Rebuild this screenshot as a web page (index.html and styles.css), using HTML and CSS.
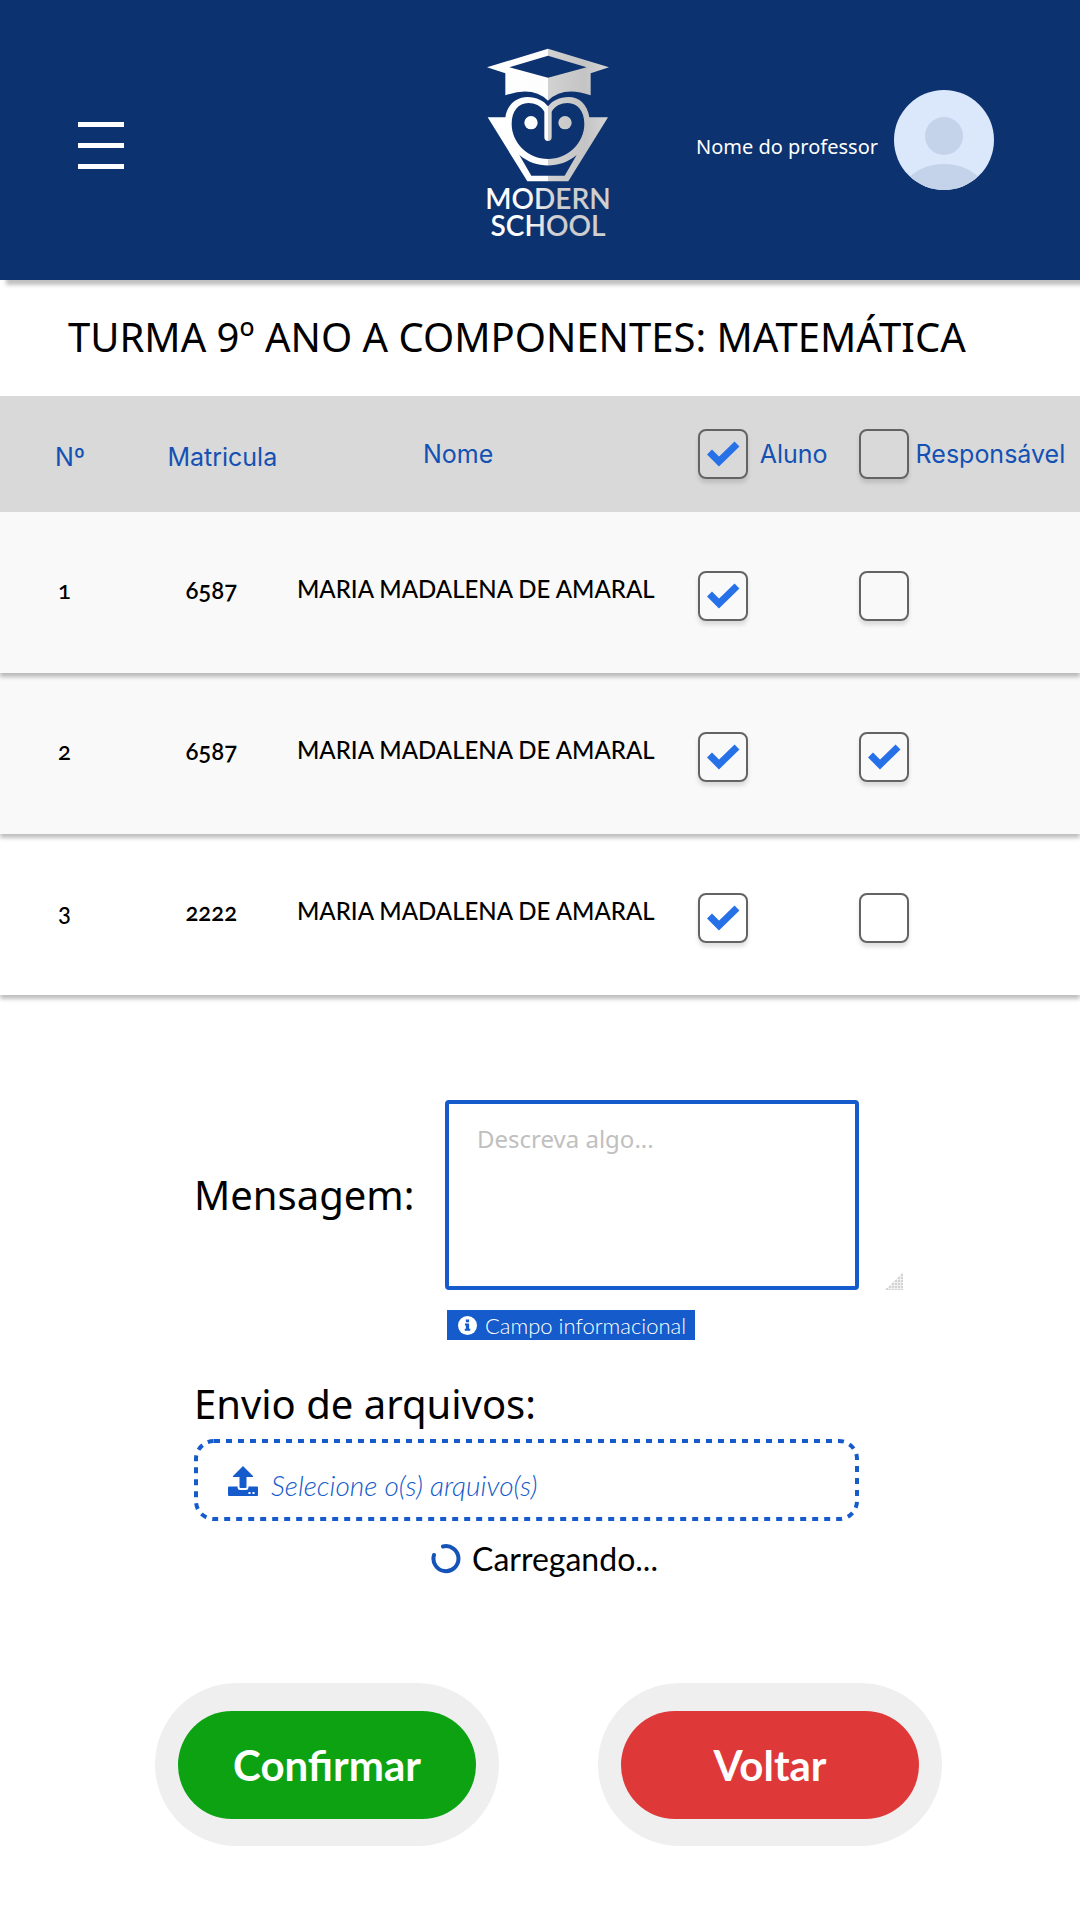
FILE: index.html
```html
<!DOCTYPE html>
<html lang="pt-BR">
<head>
<meta charset="utf-8">
<meta name="viewport" content="width=device-width, initial-scale=1">
<title>Modern School</title>
<link rel="stylesheet" href="styles.css">
</head>
<body>
<header class="topbar">
  <button class="menu" type="button" aria-label="Menu"><span class="menu-bar"></span><span class="menu-bar"></span><span class="menu-bar"></span></button>
  <svg class="logo" viewBox="51 55 366 570" role="img" aria-label="Modern School">
    <defs>
      <linearGradient id="metal" gradientUnits="userSpaceOnUse" x1="51" y1="0" x2="417" y2="0">
        <stop offset="0" stop-color="#fff"/><stop offset=".5" stop-color="#fdfdfd"/>
        <stop offset=".5" stop-color="#d2d2d2"/><stop offset=".8" stop-color="#c4c4c4"/><stop offset="1" stop-color="#d6d6d6"/>
      </linearGradient>
      <linearGradient id="lettering" gradientUnits="userSpaceOnUse" x1="51" y1="0" x2="417" y2="0">
        <stop offset=".3" stop-color="#fff"/><stop offset=".58" stop-color="#ccc"/><stop offset="1" stop-color="#d0d0d0"/>
      </linearGradient>
    </defs>
    <g fill="url(#metal)" fill-rule="evenodd">
      <path d="M51 113 234 57 417 113 362 131V197Q280 168 234 213Q188 168 106 197V131ZM118 113 234 144 350 113 234 78Z"/>
      <path d="M53 263H106C112 222 142 202 172 202C200 202 222 214 234 230C246 214 268 202 296 202C326 202 352 222 358 263H414L295 455H172ZM223 246C212 228 195 220 175 220C145 220 125 245 125 283C125 340 175 388 234 388C293 388 343 340 343 283C343 245 323 220 293 220C273 220 256 228 245 246V323a11 11 0 0 1-22 0ZM148 376 184 438H284L320 376C270 418 198 418 148 376Z"/>
      <circle cx="183" cy="279" r="20"/>
      <circle cx="285" cy="279" r="20"/>
    </g>
    <g class="logo-text" fill="url(#lettering)" text-anchor="middle">
      <text x="234" y="537">MODERN</text>
      <text x="234" y="620">SCHOOL</text>
    </g>
  </svg>
  <div class="user">
    <span class="user-name">Nome do professor</span>
    <svg class="avatar" viewBox="0 0 100 100" aria-hidden="true">
      <clipPath id="round"><circle cx="50" cy="50" r="50"/></clipPath>
      <g clip-path="url(#round)">
        <path fill="#dbe7fb" d="M0 0h100v100H0z"/>
        <circle cx="50" cy="46" r="19" fill="#c5d3ea"/>
        <path fill="#c5d3ea" d="M10 92C22 79 35 74 50 74S78 79 90 92V100H10Z"/>
      </g>
    </svg>
  </div>
</header>

<main>
  <h1 class="title">TURMA 9º ANO A COMPONENTES: MATEMÁTICA</h1>

  <table class="students">
    <colgroup><col class="col-number"><col class="col-id"><col class="col-name"><col class="col-student"><col class="col-guardian"></colgroup>
    <thead>
      <tr>
        <th class="number" scope="col">Nº</th>
        <th class="id" scope="col">Matricula</th>
        <th class="name" scope="col">Nome</th>
        <th scope="col"><label class="check-label student"><input class="check" type="checkbox" checked>Aluno</label></th>
        <th scope="col"><label class="check-label guardian"><input class="check" type="checkbox">Responsável</label></th>
      </tr>
    </thead>
    <tbody>
      <tr class="shaded">
        <td class="number">1</td><td class="id">6587</td><td class="name">MARIA MADALENA DE AMARAL</td>
        <td class="pick"><input class="check" type="checkbox" aria-label="Aluno 1" checked></td>
        <td class="pick"><input class="check" type="checkbox" aria-label="Responsável 1"></td>
      </tr>
      <tr class="shaded">
        <td class="number">2</td><td class="id">6587</td><td class="name">MARIA MADALENA DE AMARAL</td>
        <td class="pick"><input class="check" type="checkbox" aria-label="Aluno 2" checked></td>
        <td class="pick"><input class="check" type="checkbox" aria-label="Responsável 2" checked></td>
      </tr>
      <tr>
        <td class="number">3</td><td class="id">2222</td><td class="name">MARIA MADALENA DE AMARAL</td>
        <td class="pick"><input class="check" type="checkbox" aria-label="Aluno 3" checked></td>
        <td class="pick"><input class="check" type="checkbox" aria-label="Responsável 3"></td>
      </tr>
    </tbody>
  </table>

  <form class="form">
    <label class="field-label" for="message">Mensagem:</label>
    <textarea class="message" id="message" placeholder="Descreva algo..."></textarea>
    <svg class="grip" viewBox="0 0 18 18" aria-hidden="true">
      <path fill="#f0f0f0" d="M18 0V18H0Z"/>
      <path stroke="#d4d4d4" stroke-width="2" stroke-dasharray="2 1" d="M17 2V18M14 5V18M11 8V18M8 11V18M5 14V18M2 16V18"/>
    </svg>
    <p class="info">
      <svg class="info-icon" viewBox="0 0 20 20" aria-hidden="true"><circle cx="10" cy="10" r="10" fill="#fff"/><path fill="#155bcb" d="M8.3 3.6h3.4v3H8.3zM7.3 8h4.4v5.4h1.2v2H7.1v-2h1.2V10h-1z"/></svg>
      Campo informacional
    </p>
    <label class="field-label files-label" for="files">Envio de arquivos:</label>
    <label class="drop">
      <svg class="drop-outline" aria-hidden="true"><rect class="drop-rect" x="2" y="2" rx="18"/></svg>
      <svg class="drop-icon" viewBox="0 0 30 30" aria-hidden="true"><path fill="#155bcb" fill-rule="evenodd" d="M15 0 25 10Q25.500 11 24 11H18.500V21Q18.500 22 17.500 22H12.500Q11.500 22 11.500 21V11H6Q4.500 11 5 10ZM1 20.500H9.500Q9.500 24 12 24H18Q20.500 24 20.500 20.500H29Q30 20.500 30 21.500V29Q30 30 29 30H1Q0 30 0 29V21.500Q0 20.500 1 20.500ZM20.500 26V28H22.500V26ZM24.500 26V28H26.500V26Z"/></svg>
      <span>Selecione o(s) arquivo(s)</span>
      <input class="file" id="files" type="file" multiple>
    </label>
    <p class="loading" role="status">
      <svg class="spinner" viewBox="0 0 30 30" aria-hidden="true"><path fill="none" stroke="#1653b8" stroke-width="4" stroke-linecap="round" d="M12 2.500A12.500 12.500 0 1 1 3 11"/></svg>
      Carregando...
    </p>
  </form>

  <div class="actions">
    <div class="halo"><button class="btn confirm" type="button">Confirmar</button></div>
    <div class="halo"><button class="btn back" type="button">Voltar</button></div>
  </div>
</main>
</body>
</html>
```
FILE: styles.css
```css
* { box-sizing: border-box; }

body {
  margin: 0;
  background: #fff;
  color: #000;
  font-family: "Noto Sans", sans-serif;
}

.topbar {
  display: grid;
  grid-template-columns: 1fr 122px 1fr;
  align-items: center;
  height: 280px;
  padding: 0 62px 0 78px;
  background: #0c326f;
  box-shadow: 6px 5px 4px rgba(0, 0, 0, .25);
}

.menu {
  display: flex;
  flex-direction: column;
  justify-content: space-between;
  width: 46px;
  height: 47px;
  margin-top: 11px;
  padding: 0;
  border: 0;
  background: none;
}
.menu-bar { height: 5px; background: #fff; }

.logo { width: 122px; height: 190px; margin-top: 6px; overflow: visible; }
.logo-text { font: 600 84px Lato, sans-serif; }

.user {
  display: flex;
  justify-content: flex-end;
  align-items: center;
  gap: 16px;
  margin-right: 24px;
  color: #fff;
  font-size: 20px;
}
.user-name { padding-top: 12px; }
.avatar { width: 100px; height: 100px; }

.title {
  margin: 0;
  padding: 27px 68px 29px;
  font-size: 40px;
  line-height: 60px;
  font-weight: 400;
}

.students {
  width: 100%;
  border-collapse: collapse;
  table-layout: fixed;
}
.students th, .students td { padding: 0; text-align: left; }
.students th {
  height: 116px;
  color: #1351b4;
  font: 400 25px Inter, sans-serif;
}
.students thead { background: #d9d9d9; }
.students td { height: 161px; }
.students tbody tr { position: relative; box-shadow: 0 4px 4px rgba(0, 0, 0, .25); }
.students tbody tr:nth-child(1) { z-index: 3; }
.students tbody tr:nth-child(2) { z-index: 2; }
.shaded { background: #f9f9f9; }
.col-number { width: 15.5%; }
.col-id { width: 12%; }
.col-name { width: 37.1%; }
.col-student { width: 14.9%; }
.col-guardian { width: 20.5%; }

.students th.number { padding: 6px 0 0 55px; }
.students th.id { padding-top: 6px; }
.students th.name { padding-left: 126px; }
.students td.number { padding: 0 0 6px 58px; }
.students td.id { padding: 0 0 6px 18px; }
.students td.name { padding: 0 0 8px; }
.students td.pick { padding-top: 6px; }
td.number, td.id, td.name {
  font: 500 24px Lato, sans-serif;
  font-variant-numeric: oldstyle-nums;
}
td.id { font-weight: 600; }
td.name { white-space: nowrap; }

.check-label { display: flex; align-items: center; }
.student { gap: 12px; }
.guardian { gap: 7px; }
.check {
  appearance: none;
  display: block;
  flex: none;
  width: 50px;
  height: 50px;
  margin: 0;
  border: 2px solid #636363;
  border-radius: 8px;
  box-shadow: 0 4px 4px rgba(0, 0, 0, .12);
}
.check:checked {
  background: url("data:image/svg+xml,%3Csvg xmlns='http://www.w3.org/2000/svg' viewBox='0 0 46 46'%3E%3Cpath d='M9.500 21 19 30.500 37 13' fill='none' stroke='%232670e8' stroke-width='7'/%3E%3C/svg%3E") center / 46px 46px no-repeat;
}

.form {
  display: grid;
  grid-template-columns: 251px 1fr 44px;
  margin: 105px 177px 0 194px;
}
.field-label { align-self: center; font-size: 40px; line-height: 50px; }
.message {
  width: 100%;
  height: 190px;
  padding: 18px 28px;
  border: 4px solid #155bcb;
  border-radius: 4px;
  color: #000;
  font: 24px/34px "Noto Sans", sans-serif;
  resize: none;
}
.message::placeholder { color: #c0c0c0; opacity: 1; }
.grip { width: 18px; height: 18px; place-self: end; }
.info {
  grid-column: 2;
  justify-self: start;
  display: flex;
  align-items: center;
  gap: 8px;
  height: 30px;
  margin: 20px 0 0 2px;
  padding: 0 9px 0 11px;
  background: #155bcb;
  color: #fff;
  font: 300 22px Lato, sans-serif;
}
.info-icon { width: 19px; height: 19px; }
.files-label { grid-column: 1 / 3; margin-top: 39px; }

.drop {
  position: relative;
  grid-column: 1 / 3;
  display: flex;
  align-items: center;
  gap: 13px;
  height: 82px;
  margin-top: 10px;
  padding: 2px 0 0 34px;
  color: #155bcb;
  font: italic 300 28px Lato, sans-serif;
}
.drop span { padding-top: 8px; }
.drop-outline { position: absolute; inset: 0; width: 100%; height: 100%; }
.drop-rect {
  width: calc(100% - 4px);
  height: calc(100% - 4px);
  fill: none;
  stroke: #155bcb;
  stroke-width: 4px;
  stroke-dasharray: 6 6;
}
.drop-icon { width: 30px; height: 30px; }
.file { position: absolute; inset: 0; width: 100%; height: 100%; opacity: 0; }

.loading {
  grid-column: 1 / 3;
  display: flex;
  align-items: center;
  gap: 11px;
  margin: 18px 0 0 237px;
  font: 400 32px/40px Lato, sans-serif;
}
.spinner { width: 30px; height: 30px; }

.actions {
  display: flex;
  justify-content: center;
  gap: 99px;
  padding: 104px 0 74px 17px;
}
.halo { padding: 28px 23px 27px; border-radius: 82px; background: #efefef; }
.btn {
  display: block;
  width: 298px;
  height: 108px;
  border: 0;
  border-radius: 54px;
  color: #fff;
  font: 700 42px Lato, sans-serif;
}
.confirm { background: #0ca212; }
.back { background: #df3838; }
```
